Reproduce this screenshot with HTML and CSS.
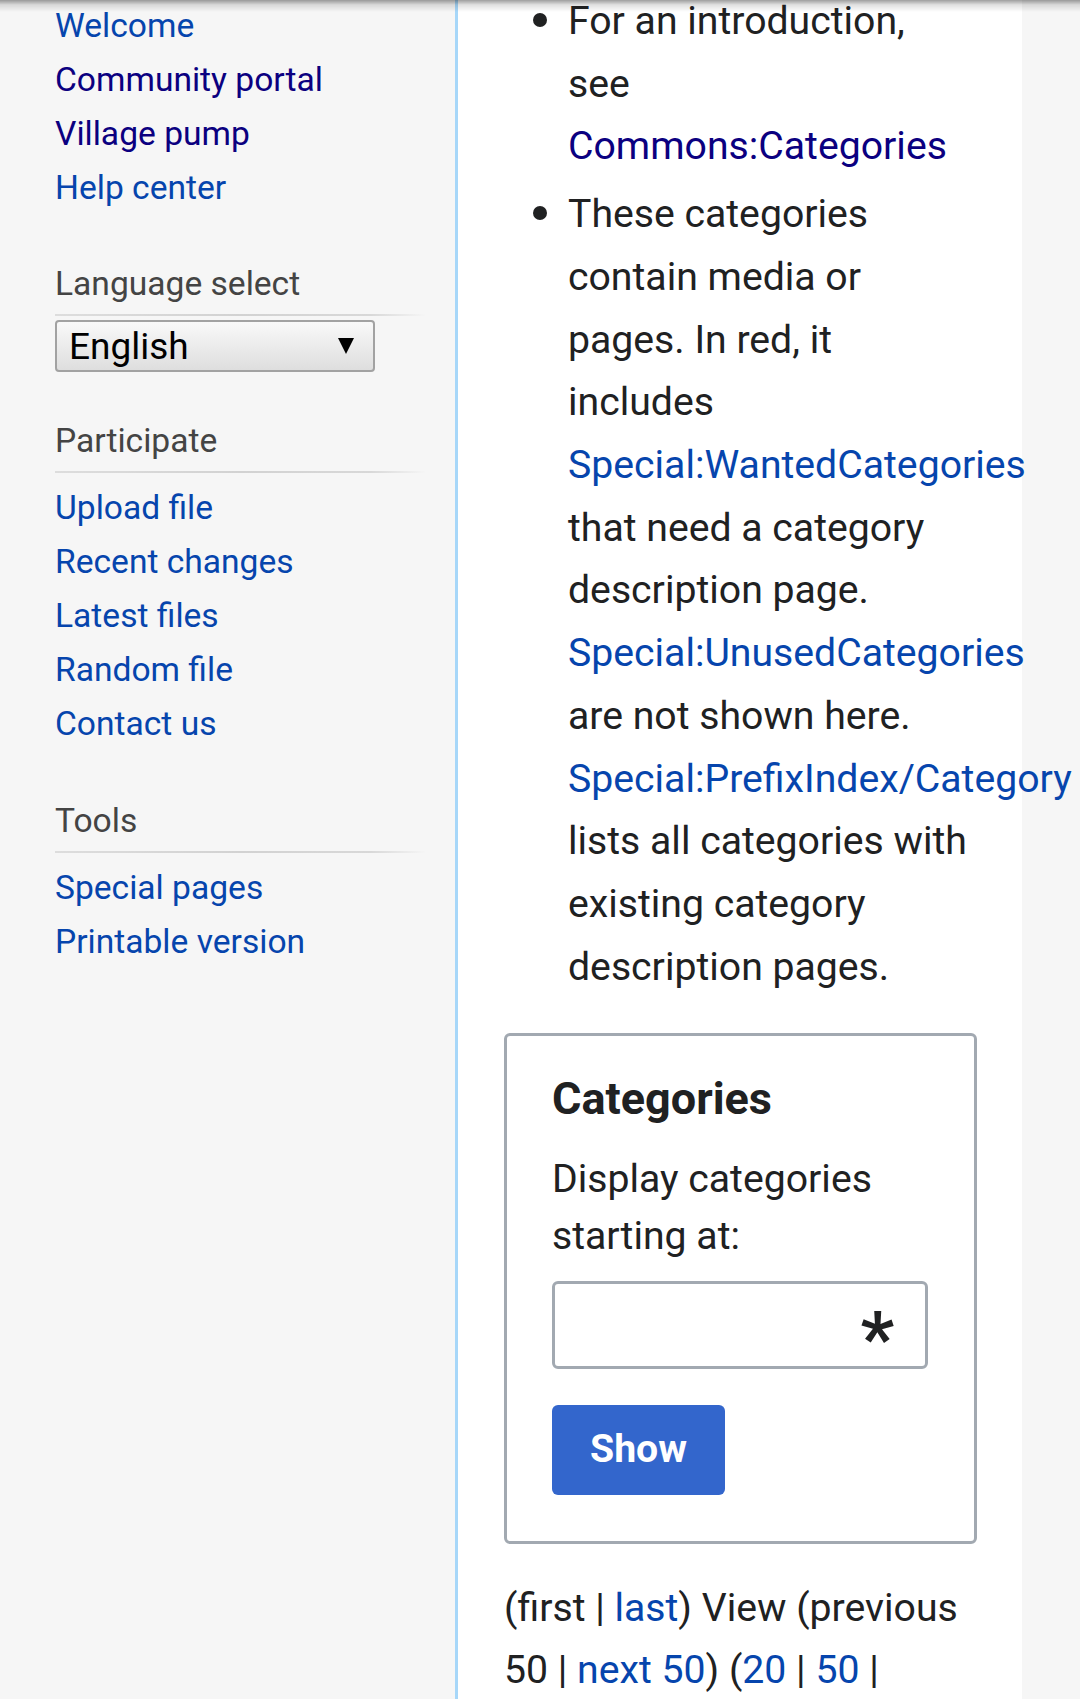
FILE: index.html
```html
<!DOCTYPE html>
<html lang="en">
<head>
<meta charset="utf-8">
<title>Categories</title>
<link rel="stylesheet" href="styles.css">
</head>
<body>
<div class="top-shadow"></div>
<div class="page">
  <nav class="sidebar">
    <ul class="portal-list first">
      <li><a href="#">Welcome</a></li>
      <li><a class="visited" href="#">Community portal</a></li>
      <li><a class="visited" href="#">Village pump</a></li>
      <li><a href="#">Help center</a></li>
    </ul>
    <h3 class="portal-heading">Language select</h3>
    <div class="select"><span class="select-text">English</span><span class="select-arrow"></span></div>
    <h3 class="portal-heading">Participate</h3>
    <ul class="portal-list">
      <li><a href="#">Upload file</a></li>
      <li><a href="#">Recent changes</a></li>
      <li><a href="#">Latest files</a></li>
      <li><a href="#">Random file</a></li>
      <li><a href="#">Contact us</a></li>
    </ul>
    <h3 class="portal-heading tools">Tools</h3>
    <ul class="portal-list">
      <li><a href="#">Special pages</a></li>
      <li><a href="#">Printable version</a></li>
    </ul>
  </nav>
  <main class="content">
    <ul class="intro-list">
      <li>For an introduction, see <a class="visited" href="#">Commons:Categories</a></li>
      <li>These categories contain media or pages. In red, it includes <a href="#">Special:WantedCategories</a> that need a category description page. <a href="#">Special:UnusedCategories</a> are not shown here. <a href="#">Special:PrefixIndex/Category</a> lists all categories with existing category description pages.</li>
    </ul>
    <div class="cat-box">
      <div class="cat-title">Categories</div>
      <div class="cat-desc">Display categories starting at:</div>
      <div class="cat-input"><span class="asterisk">*</span></div>
      <button class="show-btn" type="button">Show</button>
    </div>
    <p class="pager">(first | <a href="#">last</a>) View (previous 50 | <a href="#">next 50</a>) (<a href="#">20</a> | <a href="#">50</a> |</p>
  </main>
</div>
</body>
</html>
```
FILE: styles.css
```css
html, body {
  margin: 0;
  padding: 0;
  overflow-x: hidden;
}
body {
  background: #f6f6f6;
  font-family: Roboto, "Noto Sans", "DejaVu Sans", sans-serif;
  color: #202122;
}
a {
  color: #0645ad;
  text-decoration: none;
}
a.visited {
  color: #0b0080;
}
.top-shadow {
  position: fixed;
  top: 0;
  left: 0;
  right: 0;
  height: 12px;
  background: linear-gradient(to bottom, rgba(0,0,0,0.38), rgba(0,0,0,0.12) 40%, rgba(0,0,0,0));
  z-index: 10;
  pointer-events: none;
}
.page {
  display: flex;
  align-items: stretch;
  min-height: 100vh;
}
.sidebar {
  width: 455px;
  flex-shrink: 0;
  box-sizing: border-box;
  padding: 0 29px 0 55px;
}
.portal-list {
  list-style: none;
  margin: 8px 0 0;
  padding: 0;
}
.portal-list.first {
  margin-top: -1px;
}
.portal-list li {
  font-size: 33.6px;
  line-height: 54px;
  white-space: nowrap;
}
.portal-heading {
  margin: 49px 0 0;
  font-size: 33.6px;
  line-height: 40px;
  font-weight: normal;
  color: #444;
  padding-bottom: 12px;
  background-image: linear-gradient(to right, #dddddd 0, #d2d2d2 50%, #d8d8d8 85%, rgba(225,225,225,0) 100%);
  background-repeat: no-repeat;
  background-position: left bottom;
  background-size: 100% 2px;
}
.portal-heading.tools {
  margin-top: 50px;
}
.select {
  margin-top: 4px;
  width: 320px;
  height: 52px;
  box-sizing: border-box;
  border: 2px solid #a2a2a2;
  border-radius: 4px;
  background: linear-gradient(to bottom, #f9f9f9, #dedede);
  display: flex;
  align-items: center;
  justify-content: space-between;
  padding: 0 19px 0 12px;
}
.select-text {
  font-size: 37px;
  color: #000;
  line-height: 1;
}
.select-arrow {
  width: 0;
  height: 0;
  border-left: 8px solid transparent;
  border-right: 8px solid transparent;
  border-top: 16px solid #000;
}
.content {
  width: 567px;
  flex-shrink: 0;
  box-sizing: border-box;
  background: #fff;
  border-left: 3px solid #a7d7f9;
  padding: 0 45px 0 46px;
  font-size: 39.2px;
  line-height: 1.6;
}
.intro-list {
  margin: -12px 0 34px;
  padding: 0 7px 0 64px;
  list-style: disc;
}
.intro-list li {
  line-height: 62.72px;
}
.intro-list li::marker {
  font-size: 45px;
}
.intro-list li + li {
  margin-top: 3px;
}
.cat-box {
  border: 3px solid #a2a9b1;
  border-radius: 6px;
  padding: 36px 45px 46px;
}
.cat-title {
  font-size: 45px;
  font-weight: bold;
  line-height: 54px;
}
.cat-desc {
  margin-top: 25px;
  line-height: 57px;
}
.cat-input {
  margin-top: 16px;
  width: 376px;
  height: 88px;
  box-sizing: border-box;
  border: 3px solid #a2a9b1;
  border-radius: 6px;
  background: #fff;
  display: flex;
  align-items: center;
  justify-content: flex-end;
  padding-right: 31px;
}
.asterisk {
  font-size: 74px;
  font-weight: bold;
  line-height: 1;
  color: #202122;
  transform: translateY(14px);
}
.show-btn {
  display: block;
  margin-top: 36px;
  height: 90px;
  padding: 0 38px;
  border: 0;
  border-radius: 6px;
  background: #36c;
  color: #fff;
  font-family: Roboto, "Noto Sans", sans-serif;
  font-size: 39.2px;
  font-weight: bold;
  line-height: 1;
}
.pager {
  margin: 33px 0 0;
  line-height: 62.7px;
}
```
